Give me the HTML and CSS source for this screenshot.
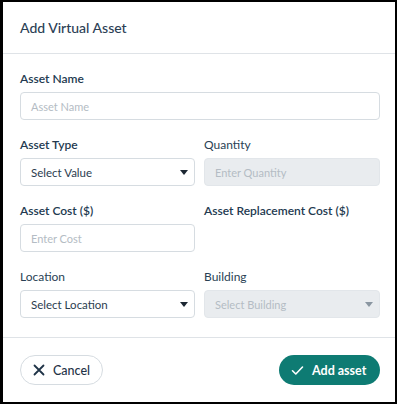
FILE: index.html
```html
<!DOCTYPE html>
<html>
<head>
<meta charset="utf-8">
<link rel="stylesheet" href="styles.css">
</head>
<body>
<div class="dialog">
  <div class="header"><h1 class="title">Add Virtual Asset</h1></div>
  <div class="body">
    <div class="field full">
      <label class="label strong">Asset Name</label>
      <div class="input"><span class="ph">Asset Name</span></div>
    </div>
    <div class="row">
      <div class="field">
        <label class="label strong">Asset Type</label>
        <div class="input select"><span class="val">Select Value</span><span class="caret dark"></span></div>
      </div>
      <div class="field">
        <label class="label">Quantity</label>
        <div class="input disabled"><span class="ph">Enter Quantity</span></div>
      </div>
    </div>
    <div class="row">
      <div class="field">
        <label class="label strong">Asset Cost ($)</label>
        <div class="input"><span class="ph">Enter Cost</span></div>
      </div>
      <div class="field">
        <label class="label strong">Asset Replacement Cost ($)</label>
      </div>
    </div>
    <div class="row">
      <div class="field">
        <label class="label">Location</label>
        <div class="input select"><span class="val">Select Location</span><span class="caret dark"></span></div>
      </div>
      <div class="field">
        <label class="label">Building</label>
        <div class="input select disabled"><span class="ph">Select Building</span><span class="caret light"></span></div>
      </div>
    </div>
  </div>
  <div class="footer">
    <button class="btn cancel">
      <svg width="12" height="12" viewBox="0 0 12 12"><path d="M1.5 1.5 L10.5 10.5 M10.5 1.5 L1.5 10.5" stroke="#1f3347" stroke-width="1.8" stroke-linecap="round"/></svg>
      <span>Cancel</span>
    </button>
    <button class="btn add">
      <svg width="13" height="11" viewBox="0 0 13 11"><path d="M1.5 5.8 L4.8 9 L11.5 2" stroke="#fff" stroke-width="1.6" fill="none" stroke-linecap="round" stroke-linejoin="round"/></svg>
      <span>Add asset</span>
    </button>
  </div>
</div>
</body>
</html>
```
FILE: styles.css
```css
* { box-sizing: border-box; }
html, body { margin: 0; padding: 0; background: #000; }
body { font-family: Lato, "Open Sans", sans-serif; }
.dialog {
  width: 397px;
  height: 404px;
  background: #fff;
  border-style: solid;
  border-color: #000;
  border-width: 2px 2px 2px 3px;
  display: flex;
  flex-direction: column;
}
.header {
  height: 52px;
  border-bottom: 1px solid #dfe3e7;
  display: flex;
  align-items: center;
  padding: 0 17px;
}
.title {
  margin: 0;
  font-size: 14px;
  font-weight: 500;
  color: #2b4055;
}
.body {
  padding: 18px 15px 0 17px;
  display: flex;
  flex-direction: column;
  gap: 18px;
  height: 284px;
  border-bottom: 1px solid #dfe3e7;
}
.row {
  display: grid;
  grid-template-columns: 175px 176px;
  gap: 9px;
}
.field { display: flex; flex-direction: column; gap: 6px; }
.label {
  font-size: 12px;
  font-weight: 400;
  color: #2a3f54;
  line-height: 14px;
}
.label.strong { font-weight: 600; color: #233a50; }
.input {
  height: 28px;
  border: 1px solid #d6dce1;
  border-radius: 4px;
  display: flex;
  align-items: center;
  padding: 0 10px;
  font-size: 11px;
}
.ph { color: #b4bcc4; }
.val { color: #2b3d4f; font-size: 11.5px; }
.select { justify-content: space-between; padding-right: 6px; }
.disabled { background: #e9ecef; border-color: #e2e6ea; }
.caret {
  width: 0; height: 0;
  border-left: 4.5px solid transparent;
  border-right: 4.5px solid transparent;
  border-top: 5px solid #1c2733;
}
.caret.light { border-top-color: #8a96a1; }
.footer {
  flex: 1;
  display: flex;
  justify-content: space-between;
  align-items: center;
  padding: 0 15px 0 17px;
}
.btn {
  height: 30px;
  border-radius: 15px;
  display: flex;
  align-items: center;
  gap: 8px;
  font-family: Lato, sans-serif;
  font-size: 12.5px;
  cursor: pointer;
}
.cancel {
  width: 83px;
  background: #fff;
  border: 1px solid #d6dce1;
  color: #1f3347;
  padding: 0 0 0 12px;
  font-weight: 500;
}
.add {
  width: 101px;
  background: #0e7b73;
  border: none;
  color: #fff;
  font-weight: 700;
  padding: 0 0 0 12px;
}
```
